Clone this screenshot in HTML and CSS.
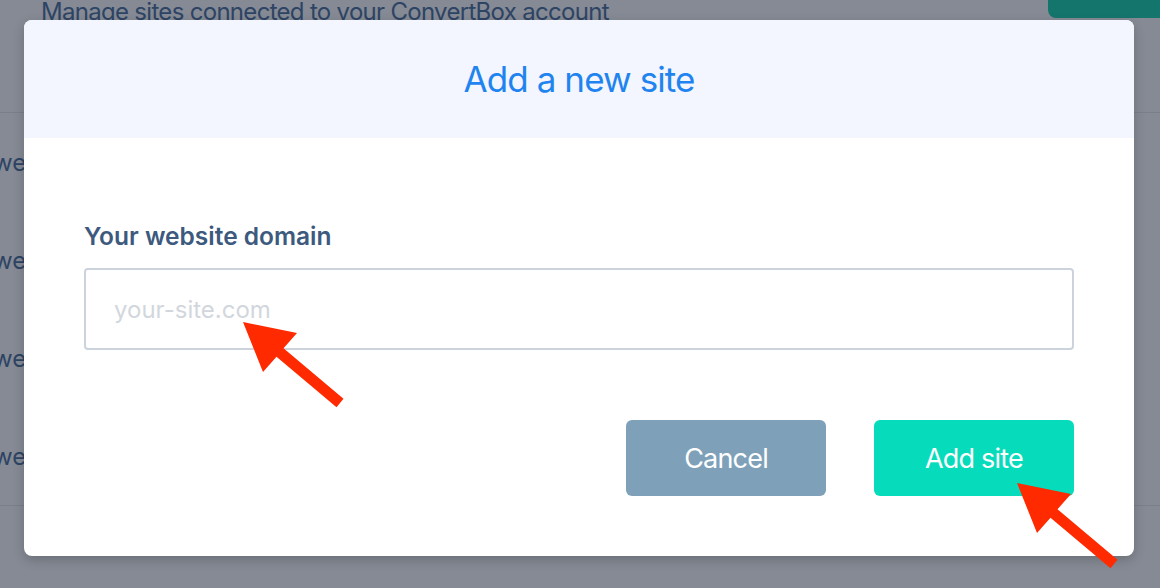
FILE: index.html
```html
<!DOCTYPE html>
<html>
	<head>
		<meta charset="UTF-8">
		<title>Add a new site</title>
		<link rel="stylesheet" href="styles.css">
	</head>
	<body>
		<!-- page behind the modal (scrolled a little) -->
		<div class="page">
			<div class="page-head">
				<p class="page-sub">Manage sites connected to your ConvertBox account</p>
				<a class="page-btn" href="javascript:;">Add site</a>
			</div>
			<ul class="site-list">
				<li>website-one.com</li>
				<li>website-two.com</li>
				<li>website-three.com</li>
				<li>website-four.com</li>
			</ul>
		</div>

		<div class="backdrop">
			<div class="modal">
				<div class="modal-head">
					<h2>Add a new site</h2>
				</div>
				<div class="modal-body">
					<label class="field-label" for="domain">Your website domain</label>
					<input class="field-input" id="domain" type="text" placeholder="your-site.com">
					<div class="actions">
						<a class="btn btn-cancel" href="javascript:;">Cancel</a>
						<a class="btn btn-add" href="javascript:;">Add site</a>
					</div>
				</div>
			</div>
		</div>

		<!-- red annotation arrows -->
		<svg class="marks" width="1160" height="588" viewBox="0 0 1160 588">
			<polygon id="arrow" fill="#ff2a00" points="243,322 297,333 283.5,348.3 343.5,398.8 336.5,407.2 276.5,356.7 263,372"/>
			<use href="#arrow" transform="translate(774,161)"/>
		</svg>
	</body>
</html>
```

FILE: styles.css
```css
*{
	margin: 0;
	padding: 0;
	box-sizing: border-box;
}
html, body{
	width: 1160px;
	height: 588px;
	overflow: hidden;
}
body{
	font-family: Inter, "Noto Sans", sans-serif;
	background-color: #fff;
	position: relative;
}

/* page behind */
.page{
	margin-top: -40px;
}
.page-head{
	height: 153px;
	display: flex;
	justify-content: space-between;
	align-items: flex-start;
	padding-left: 41px;
	border-bottom: 1px solid #e9ebeb;
}
.page-sub{
	margin-top: 34px;
	font-size: 24px;
	line-height: 36px;
	letter-spacing: -0.7px;
	color: #51739f;
	white-space: nowrap;
}
.page-btn{
	width: 140px;
	height: 58px;
	margin-right: -28px;
	border-radius: 8px;
	background-color: #1dd5af;
}
.site-list{
	list-style: none;
	border-bottom: 1px solid #e9ebeb;
}
.site-list li{
	height: 98px;
	display: flex;
	align-items: center;
	margin-left: -7px;
	font-size: 24px;
	color: #51739f;
	white-space: nowrap;
}

/* modal */
.backdrop{
	position: absolute;
	left: 0;
	top: 0;
	width: 1160px;
	height: 588px;
	background-color: rgba(11, 21, 41, 0.5);
	padding: 20px 26px 32px 24px;
}
.modal{
	width: 1110px;
	height: 536px;
	background-color: #fff;
	border-radius: 8px;
	overflow: hidden;
	box-shadow: 0 4px 12px rgba(0, 0, 0, 0.2);
}
.modal-head{
	height: 118px;
	background-color: #f3f6fe;
	display: flex;
	align-items: center;
	justify-content: center;
}
.modal-head h2{
	font-size: 35px;
	font-weight: 400;
	letter-spacing: -0.9px;
	color: #1f84ef;
	line-height: 1;
	margin-top: 1px;
}
.modal-body{
	padding: 80px 60px 0 60px;
}
.field-label{
	display: block;
	font-size: 24.5px;
	line-height: 36px;
	font-weight: 600;
	color: #3d5a7e;
}
.field-input{
	display: block;
	width: 100%;
	height: 82px;
	margin-top: 14px;
	border: 2px solid #cdd3dc;
	border-radius: 4px;
	padding: 0 28px;
	font-family: Inter, "Noto Sans", sans-serif;
	font-size: 24px;
	color: #3d5a7e;
	outline: none;
}
.field-input::placeholder{
	color: #d2d7dd;
}
.actions{
	display: flex;
	justify-content: flex-end;
	gap: 48px;
	margin-top: 70px;
}
.btn{
	width: 200px;
	height: 76px;
	border-radius: 6px;
	display: flex;
	align-items: center;
	justify-content: center;
	font-size: 27px;
	letter-spacing: -0.8px;
	color: #fff;
	text-decoration: none;
}
.btn-cancel{
	background-color: #7ea1b9;
}
.btn-add{
	background-color: #06dcbb;
}

.marks{
	position: absolute;
	left: 0;
	top: 0;
	pointer-events: none;
}
```
